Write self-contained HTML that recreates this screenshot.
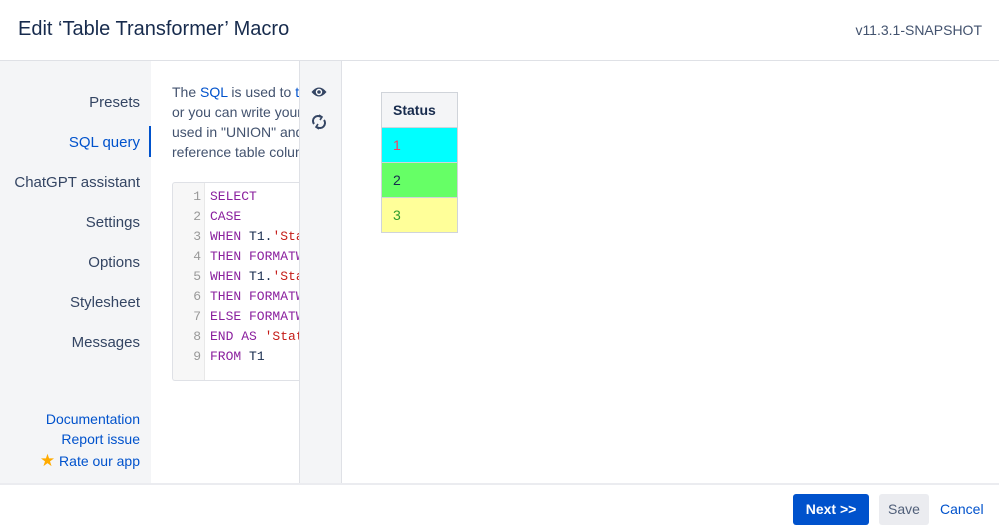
<!DOCTYPE html><html><head><style>
body{margin:0;width:999px;height:532px;position:relative;font-family:"Liberation Sans",sans-serif;background:#fff;overflow:hidden;color:#172b4d}
.a{position:absolute}
.nav{right:859px;font-size:15px;color:#344563;text-align:right;white-space:nowrap}
.code div{height:20px;line-height:20px;font-family:"Liberation Mono",monospace;font-size:13px;white-space:nowrap}
.k{color:#8a1f9e}.s{color:#c41a16}.n{color:#999;display:inline-block;width:28px;text-align:right;margin-right:9px}
td{border:1px solid #d0d4da;width:64px;height:34px;padding:0 0 0 11px;font-size:14px}
</style></head><body>
<div class="a" style="left:18px;top:18px;font-size:20px;color:#172b4d">Edit ‘Table Transformer’ Macro</div>
<div class="a" style="right:17px;top:22px;font-size:14px;color:#42526e">v11.3.1-SNAPSHOT</div>
<div class="a" style="left:0;top:60px;width:999px;height:1px;background:#dfe1e6"></div>
<div class="a" style="left:0;top:61px;width:151px;height:422px;background:#f4f5f7"></div>
<div class="a nav" style="top:94px">Presets</div>
<div class="a nav" style="top:134px;color:#0052cc">SQL query</div>
<div class="a" style="left:149px;top:126px;width:2px;height:31px;background:#0052cc"></div>
<div class="a nav" style="top:174px">ChatGPT assistant</div>
<div class="a nav" style="top:214px">Settings</div>
<div class="a nav" style="top:254px">Options</div>
<div class="a nav" style="top:294px">Stylesheet</div>
<div class="a nav" style="top:334px">Messages</div>
<div class="a nav" style="top:411px;color:#0052cc;font-size:14px">Documentation</div>
<div class="a nav" style="top:431px;color:#0052cc;font-size:14px">Report issue</div>
<div class="a nav" style="top:451px;color:#0052cc;font-size:14px"><span style="color:#ffab00;font-size:17px">★</span> Rate our app</div>
<div class="a" style="left:172px;top:82px;width:128px;overflow:hidden;font-size:14px;line-height:20px;color:#42526e;white-space:nowrap">The <span style="color:#0052cc">SQL</span> is used to <span style="color:#0052cc">transform</span><br>or you can write your own<br>used in "UNION" and<br>reference table columns</div>
<div class="a code" style="left:172px;top:182px;width:127px;height:199px;border:1px solid #dfe1e6;border-right:none;border-radius:3px 0 0 3px;overflow:hidden;background:linear-gradient(90deg,#f7f7f7 31px,#e8e8e8 31px,#e8e8e8 32px,#fff 32px);padding-top:4px;box-sizing:border-box">
<div><span class="n">1</span><span class="k">SELECT</span></div>
<div><span class="n">2</span><span class="k">CASE</span></div>
<div><span class="n">3</span><span class="k">WHEN</span> T1.<span class="s">'Status'</span></div>
<div><span class="n">4</span><span class="k">THEN FORMATWIKI</span></div>
<div><span class="n">5</span><span class="k">WHEN</span> T1.<span class="s">'Status'</span></div>
<div><span class="n">6</span><span class="k">THEN FORMATWIKI</span></div>
<div><span class="n">7</span><span class="k">ELSE FORMATWIKI</span></div>
<div><span class="n">8</span><span class="k">END AS</span> <span class="s">'Status'</span></div>
<div><span class="n">9</span><span class="k">FROM</span> T1</div>
</div>
<div class="a" style="left:299px;top:61px;width:41px;height:422px;background:#f4f5f7;border-left:1px solid #dfe1e6;border-right:1px solid #dfe1e6"></div>
<svg class="a" style="left:311px;top:85px" width="16" height="14" viewBox="0 0 16 14"><path d="M0.5 7Q8 -2 15.5 7Q8 16 0.5 7Z" fill="#344563"/><circle cx="8" cy="7" r="3.2" fill="#fff"/><circle cx="8" cy="7" r="1.8" fill="#344563"/></svg>
<svg class="a" style="left:311px;top:114px" width="16" height="16" viewBox="0 0 16 16" fill="none" stroke="#344563" stroke-width="2"><path d="M3 10A5 5 0 0 1 10 3M13 6A5 5 0 0 1 6 13"/><path d="M8 1l3 2-2 3M8 15l-3-2 2-3" stroke-width="1.6"/></svg>
<table class="a" style="left:381px;top:92px;border-collapse:collapse">
<tr><td style="background:#f4f5f7;font-weight:bold;color:#172b4d">Status</td></tr>
<tr><td style="background:#00ffff;color:#ff3b5c">1</td></tr>
<tr><td style="background:#66ff66;color:#172b4d">2</td></tr>
<tr><td style="background:#ffff99;color:#2e9c2e">3</td></tr>
</table>
<div class="a" style="left:0;top:483px;width:999px;height:2px;background:#ebecf0"></div>
<div class="a" style="left:793px;top:494px;width:76px;height:31px;background:#0052cc;border-radius:3px;color:#fff;font-weight:bold;font-size:14px;line-height:31px;text-align:center">Next &gt;&gt;</div>
<div class="a" style="left:879px;top:494px;width:50px;height:31px;background:#ebecf0;border-radius:3px;color:#505f79;font-size:14px;line-height:31px;text-align:center">Save</div>
<div class="a" style="left:940px;top:494px;font-size:14px;line-height:31px;color:#0052cc">Cancel</div>
</body></html>
